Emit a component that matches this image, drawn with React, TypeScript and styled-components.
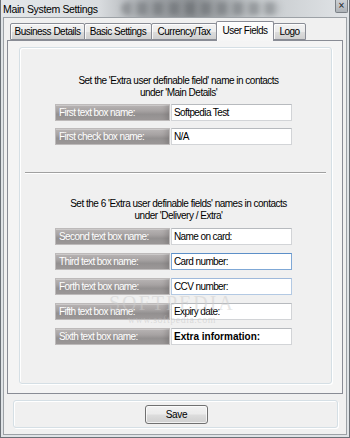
import React from "react";
import styled, { createGlobalStyle } from "styled-components";

const GlobalStyle = createGlobalStyle`
  html, body {
    margin: 0;
    padding: 0;
    background: #ffffff;
  }
  body {
    font-family: "Liberation Sans", Arial, sans-serif;
  }
  * {
    box-sizing: border-box;
  }
`;

interface Field {
  label: string;
  value: string;
  bold?: boolean;
  tone?: "focus" | "hover";
}

const mainFields: Field[] = [
  { label: "First text box name:", value: "Softpedia Test" },
  { label: "First check box name:", value: "N/A" },
];

const extraFields: Field[] = [
  { label: "Second text box name:", value: "Name on card:" },
  { label: "Third text box name:", value: "Card number:", tone: "focus" },
  { label: "Forth text box name:", value: "CCV number:", tone: "hover" },
  { label: "Fifth text box name:", value: "Expiry date:" },
  { label: "Sixth text box name:", value: "Extra information:", bold: true },
];

const tabs = [
  { name: "Business Details", width: 75 },
  { name: "Basic Settings", width: 68 },
  { name: "Currency/Tax", width: 66 },
  { name: "User Fields", width: 58, active: true },
  { name: "Logo", width: 33 },
];

function FieldRow({ label, value, bold, tone }: Field) {
  return (
    <Row>
      <Label>{label}</Label>
      <TextBox $bold={bold} $tone={tone}>
        {value}
      </TextBox>
    </Row>
  );
}

function App() {
  return (
    <>
      <GlobalStyle />
      <Window>
        <TitleBar>
          <TitleText>Main System Settings</TitleText>
          <TitleSmudge />
          <CloseButton>×</CloseButton>
        </TitleBar>
        <Client>
          <TabStrip>
            {tabs.map((t) => (
              <Tab key={t.name} $active={!!t.active} $width={t.width}>
                {t.name}
              </Tab>
            ))}
          </TabStrip>
          <TabPanel>
            <GroupBox>
              <Instruction>
                Set the 'Extra user definable field' name in contacts
                <br />
                under 'Main Details'
              </Instruction>
              <FieldList>
                {mainFields.map((f) => (
                  <FieldRow key={f.label} {...f} />
                ))}
              </FieldList>
              <Divider />
              <Instruction $second>
                Set the 6 'Extra user definable fields' names in contacts
                <br />
                under 'Delivery / Extra'
              </Instruction>
              <FieldList $loose>
                {extraFields.map((f) => (
                  <FieldRow key={f.label} {...f} />
                ))}
              </FieldList>
            </GroupBox>
          </TabPanel>
          <Footer>
            <SaveButton>Save</SaveButton>
          </Footer>
        </Client>
        <Watermark>
          SOFTPEDIA
          <small>www.softpedia.com</small>
        </Watermark>
      </Window>
    </>
  );
}

const Window = styled.div`
  position: relative;
  width: 350px;
  height: 438px;
  border: 1px solid #6b7177;
  border-top: none;
  background: #dfe3e6;
  display: flex;
  flex-direction: column;
  overflow: hidden;
`;

const TitleBar = styled.div`
  position: relative;
  height: 17px;
  flex: none;
  display: flex;
  align-items: center;
  padding-left: 2px;
  background: linear-gradient(
    90deg,
    #e4e7ea 0%,
    #dadde0 28%,
    #a4a8ac 42%,
    #8e9296 55%,
    #c6cacd 74%,
    #e1e4e7 100%
  );
  overflow: hidden;
`;

const TitleText = styled.span`
  position: relative;
  z-index: 1;
  font-size: 10.5px;
  letter-spacing: -0.35px;
  color: #000;
`;

const TitleSmudge = styled.div`
  position: absolute;
  left: 120px;
  top: 2px;
  width: 160px;
  height: 13px;
  border-radius: 6px;
  background: repeating-linear-gradient(
    90deg,
    rgba(70, 74, 78, 0.35) 0 10px,
    rgba(120, 124, 128, 0.15) 10px 16px
  );
  filter: blur(2.5px);
`;

const CloseButton = styled.div`
  position: relative;
  z-index: 1;
  margin-left: auto;
  margin-right: 1px;
  align-self: flex-start;
  width: 13px;
  height: 13px;
  border: 1px solid #7b8187;
  border-top: none;
  border-radius: 0 0 2px 2px;
  background: linear-gradient(#cdd1d5, #aeb3b8);
  color: #3d4247;
  font-size: 10px;
  line-height: 11px;
  text-align: center;
  font-weight: bold;
  text-shadow: 0 0 1px #fff;
`;

const Client = styled.div`
  flex: 1;
  margin: 0 2px 2px;
  border: 1px solid #9ca1a6;
  background: #f0f0f0;
  padding: 0 3px 6px;
  display: flex;
  flex-direction: column;
`;

const TabStrip = styled.div`
  height: 22px;
  flex: none;
  display: flex;
  align-items: flex-end;
  padding-left: 4px;
  position: relative;
  z-index: 1;
`;

const Tab = styled.div<{ $active: boolean; $width: number }>`
  width: ${(p) => p.$width}px;
  height: ${(p) => (p.$active ? 20 : 17)}px;
  margin-left: -1px;
  margin-bottom: ${(p) => (p.$active ? -1 : 0)}px;
  border: 1px solid #898c95;
  border-bottom: ${(p) => (p.$active ? "none" : "1px solid #898c95")};
  border-radius: 2px 2px 0 0;
  background: ${(p) =>
    p.$active
      ? "linear-gradient(#fdfdfd, #f5f5f5)"
      : "linear-gradient(#f2f2f2 0%, #ebebeb 50%, #dddddd 51%, #cfcfcf 100%)"};
  box-shadow: inset 1px 1px 0 rgba(255, 255, 255, 0.8);
  font-size: 10px;
  letter-spacing: -0.5px;
  color: #000;
  display: flex;
  align-items: ${(p) => (p.$active ? "flex-start" : "center")};
  padding-top: ${(p) => (p.$active ? 3 : 0)}px;
  justify-content: center;
  white-space: nowrap;
`;

const TabPanel = styled.div`
  height: 354px;
  flex: none;
  border: 1px solid #898c95;
  background: #f4f4f4;
  padding: 6px 10px 9px 11px;
  display: flex;
`;

const GroupBox = styled.div`
  flex: 1;
  border: 1px solid #d5dfe5;
  border-radius: 3px;
  box-shadow: inset 1px 1px 0 #ffffff, 1px 1px 0 #ffffff;
  background: #f0f0f0;
  padding-top: 27px;
  display: flex;
  flex-direction: column;
`;

const Instruction = styled.div<{ $second?: boolean }>`
  margin-top: ${(p) => (p.$second ? 24 : 0)}px;
  padding-left: 6px;
  text-align: center;
  font-size: 10px;
  line-height: 11.5px;
  letter-spacing: -0.5px;
  color: #000;
`;

const FieldList = styled.div<{ $loose?: boolean }>`
  margin-top: ${(p) => (p.$loose ? 7 : 6)}px;
  padding-left: 35px;
  display: flex;
  flex-direction: column;
  gap: ${(p) => (p.$loose ? 8 : 7)}px;
`;

const Row = styled.div`
  display: flex;
  height: 17px;
`;

const Label = styled.div`
  width: 115px;
  height: 17px;
  padding-left: 3px;
  border: 1px solid #bdbaba;
  background: linear-gradient(
    180deg,
    #b8b4b4 0%,
    #a6a2a2 40%,
    #939090 62%,
    #9c9898 100%
  );
  box-shadow: inset -7px 0 5px -4px rgba(70, 66, 66, 0.22),
    inset 0 1px 0 rgba(255, 255, 255, 0.3);
  color: #ffffff;
  font-size: 10px;
  letter-spacing: -0.6px;
  line-height: 15px;
  white-space: nowrap;
  overflow: hidden;
`;

const TextBox = styled.div<{ $bold?: boolean; $tone?: "focus" | "hover" }>`
  width: 121px;
  height: 17px;
  margin-left: 1px;
  padding-left: 2px;
  background: #ffffff;
  border: 1px solid
    ${(p) =>
      p.$tone === "focus" ? "#7fa8d6" : p.$tone === "hover" ? "#b3c9e3" : "#d2d4d7"};
  border-top-color: ${(p) =>
    p.$tone === "focus" ? "#5c8fc8" : p.$tone === "hover" ? "#9fb9da" : "#b7babe"};
  color: #000;
  font-size: 10px;
  font-weight: ${(p) => (p.$bold ? "bold" : "normal")};
  letter-spacing: ${(p) => (p.$bold ? "0" : "-0.6px")};
  line-height: 15px;
  white-space: nowrap;
  overflow: hidden;
`;

const Divider = styled.div`
  margin: 27px 5px 0;
  height: 2px;
  border-top: 1px solid #a0a0a0;
  border-bottom: 1px solid #ffffff;
`;

const Footer = styled.div`
  margin: 6px 5px 0 6px;
  height: 28px;
  flex: none;
  border: 1px solid #d5dfe5;
  border-radius: 3px;
  box-shadow: inset 1px 1px 0 #ffffff, 1px 1px 0 #ffffff;
  display: flex;
  align-items: center;
  justify-content: center;
`;

const SaveButton = styled.button`
  width: 63px;
  height: 19px;
  margin-left: 2px;
  padding: 0;
  border: 1px solid #707070;
  border-radius: 3px;
  background: linear-gradient(#f2f2f2 0%, #ebebeb 48%, #dddddd 52%, #cfcfcf 100%);
  box-shadow: inset 0 0 0 1px rgba(255, 255, 255, 0.7);
  font-family: "Liberation Sans", Arial, sans-serif;
  font-size: 10px;
  letter-spacing: -0.3px;
  color: #000;
`;

const Watermark = styled.div`
  position: absolute;
  left: 108px;
  top: 293px;
  pointer-events: none;
  font-family: "Liberation Serif", serif;
  font-size: 20px;
  letter-spacing: 2px;
  color: rgba(205, 205, 205, 0.5);
  display: flex;
  flex-direction: column;
  align-items: center;
  line-height: 20px;

  small {
    font-size: 10px;
    letter-spacing: 0.5px;
    line-height: 14px;
    color: rgba(190, 190, 190, 0.45);
  }
`;

export default App;
